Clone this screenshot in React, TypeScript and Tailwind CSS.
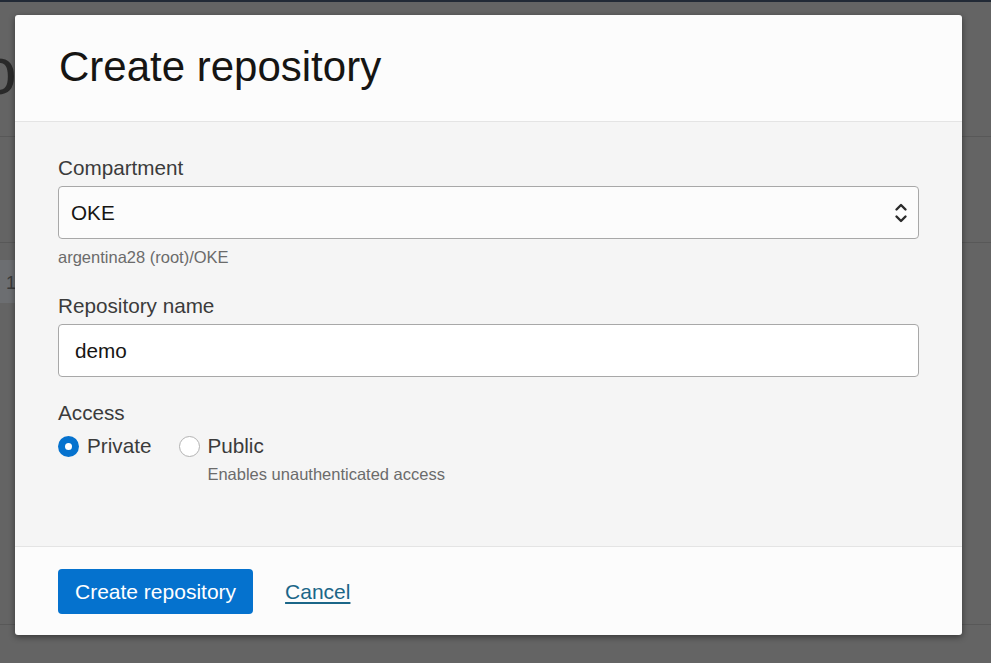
import React, { useState } from 'react';

const font = { fontFamily: '"Liberation Sans", Arial, sans-serif' };

const Chevrons = () => (
  <svg width="14" height="22" viewBox="0 0 14 22" fill="none" stroke="#2b2b2b" strokeWidth="2.4" strokeLinecap="round" strokeLinejoin="round">
    <path d="M2.5 7.5 7 3l4.5 4.5" />
    <path d="M2.5 14.5 7 19l4.5-4.5" />
  </svg>
);

const Radio = ({ checked }: { checked: boolean }) =>
  checked ? (
    <span className="mt-[1px] flex h-[21px] w-[21px] shrink-0 items-center justify-center rounded-full bg-[#0572ce]">
      <span className="h-[7px] w-[7px] rounded-full bg-white" />
    </span>
  ) : (
    <span className="mt-[1px] h-[21px] w-[21px] shrink-0 rounded-full border border-[#b3b3b3] bg-white" />
  );

export default function App() {
  const [access, setAccess] = useState<'private' | 'public'>('private');

  return (
    <div className="relative h-[663px] w-full overflow-hidden bg-[#646464]" style={font}>
      {/* page behind the overlay */}
      <div className="h-[2px] bg-[#222a36]" />
      <div className="flex h-[135px] items-start border-b border-[#585858]">
        <span className="mt-[36px] -ml-[20px] text-[66px] leading-none text-[#2a2a2a]">o</span>
      </div>
      <div className="h-[106px] border-b border-[#585858]" />
      <div className="mt-[17px] h-[43px] w-[40px] bg-[#6c6e71] pl-[6px] pt-[10px] text-[18px] text-[#3a3a3a]">1</div>
      <div className="h-[322px] border-b border-[#585858]" />

      {/* modal */}
      <div className="absolute left-[15px] top-[15px] flex h-[620px] w-[947px] flex-col overflow-hidden rounded-[3px] bg-[#fcfcfc] shadow-[0_2px_6px_rgba(0,0,0,0.45)]">
        <div className="h-[107px] shrink-0 border-b border-[#e4e4e4] px-[44px] pt-[31px]">
          <h1 className="text-[42px] leading-none text-[#161513]">Create repository</h1>
        </div>

        <div className="h-[425px] shrink-0 border-b border-[#e4e4e4] bg-[#f5f5f5] px-[43px] pt-[34px]">
          <label className="block text-[20.7px] leading-[24px] text-[#3b3b3b]">Compartment</label>
          <div className="mt-[6px] flex h-[53px] items-center justify-between rounded-[4px] border border-[#a8a8a8] bg-[#fcfcfc] pl-[12px] pr-[10px]">
            <span className="text-[20.7px] text-[#161513]">OKE</span>
            <Chevrons />
          </div>
          <p className="mt-[8px] text-[16.5px] leading-[20px] text-[#6b6b6b]">argentina28 (root)/OKE</p>

          <label className="mt-[27px] block text-[20.7px] leading-[24px] text-[#3b3b3b]">Repository name</label>
          <div className="mt-[6px] flex h-[53px] items-center rounded-[4px] border border-[#a8a8a8] bg-white pl-[16px]">
            <span className="text-[20.7px] text-[#161513]">demo</span>
          </div>

          <label className="mt-[24px] block text-[20.7px] leading-[24px] text-[#3b3b3b]">Access</label>
          <div className="mt-[10px] flex gap-[28px]">
            <button className="flex items-start gap-[8px]" onClick={() => setAccess('private')}>
              <Radio checked={access === 'private'} />
              <span className="text-[20.7px] leading-[22px] text-[#3b3b3b]">Private</span>
            </button>
            <button className="flex items-start gap-[7px] text-left" onClick={() => setAccess('public')}>
              <Radio checked={access === 'public'} />
              <span className="flex flex-col">
                <span className="text-[20.7px] leading-[22px] text-[#3b3b3b]">Public</span>
                <span className="mt-[7px] text-[16.5px] leading-[20px] text-[#6b6b6b]">Enables unauthenticated access</span>
              </span>
            </button>
          </div>
        </div>

        <div className="flex items-center gap-[32px] px-[43px] pt-[22px]">
          <button className="h-[45px] rounded-[4px] bg-[#0572ce] px-[17px] text-[21px] text-white">Create repository</button>
          <a href="#" className="text-[21px] text-[#1b6688] underline decoration-[2px] underline-offset-[3px]">Cancel</a>
        </div>
      </div>
    </div>
  );
}
